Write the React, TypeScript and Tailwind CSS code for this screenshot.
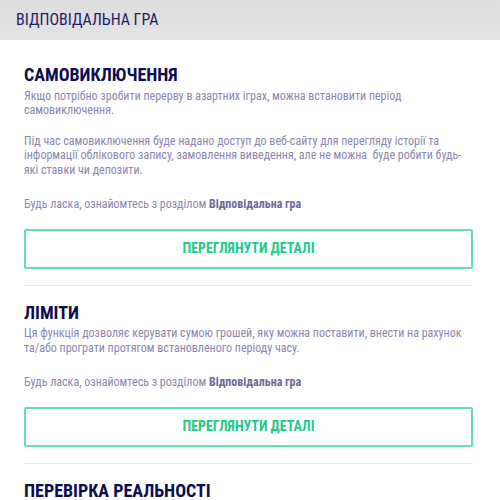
import React from "react";

const font = { fontFamily: "'Roboto Condensed', Roboto, sans-serif" };

function Section({ title, paras, showFooter = true }: { title: string; paras: string[]; showFooter?: boolean }) {
  return (
    <div className="pt-[17px]">
      <h2 className="text-[18px] leading-[20px] font-bold text-[#0c0c52]">{title}</h2>
      {paras.map((p, i) => (
        <p key={i} className={`text-[12px] leading-[14.5px] text-[#8a86b0] ${i === 0 ? "mt-[3.5px]" : "mt-[16px]"}`}>{p}</p>
      ))}
      {showFooter && (
        <>
          <p className="mt-[20px] text-[12px] leading-[14.5px] text-[#8a86b0]">
            Будь ласка, ознайомтесь з розділом <span className="font-bold text-[#6e6a99]">Відповідальна гра</span>
          </p>
          <button className="mt-[17px] w-full h-[40px] border-2 border-[#5fe0b5] rounded-[2px] text-[14px] font-bold text-[#22c98a]">
            ПЕРЕГЛЯНУТИ ДЕТАЛІ
          </button>
          <div className="mt-[16px] h-px bg-[#e6e6e6]" />
        </>
      )}
    </div>
  );
}

export default function App() {
  return (
    <div className="w-[500px] h-[500px] overflow-hidden bg-white" style={font}>
      <div className="h-[40px] bg-gradient-to-b from-[#dcdcdc] to-[#e4e4e4] flex items-center px-[16px]">
        <span className="text-[16px] text-[#1d1d6b]">ВІДПОВІДАЛЬНА ГРА</span>
      </div>
      <div className="pl-[24px] pr-[27px] pt-[8px]">
        <Section
          title="САМОВИКЛЮЧЕННЯ"
          paras={[
            "Якщо потрібно зробити перерву в азартних іграх, можна встановити період самовиключення.",
            "Під час самовиключення буде надано доступ до веб-сайту для перегляду історії та інформації облікового запису, замовлення виведення, але не можна\u00a0 буде робити будь-які ставки чи депозити.",
          ]}
        />
        <Section
          title="ЛІМІТИ"
          paras={[
            "Ця функція дозволяє керувати сумою грошей, яку можна поставити, внести на рахунок та/або програти протягом встановленого періоду часу.",
          ]}
        />
        <Section title="ПЕРЕВІРКА РЕАЛЬНОСТІ" paras={[]} showFooter={false} />
      </div>
    </div>
  );
}
